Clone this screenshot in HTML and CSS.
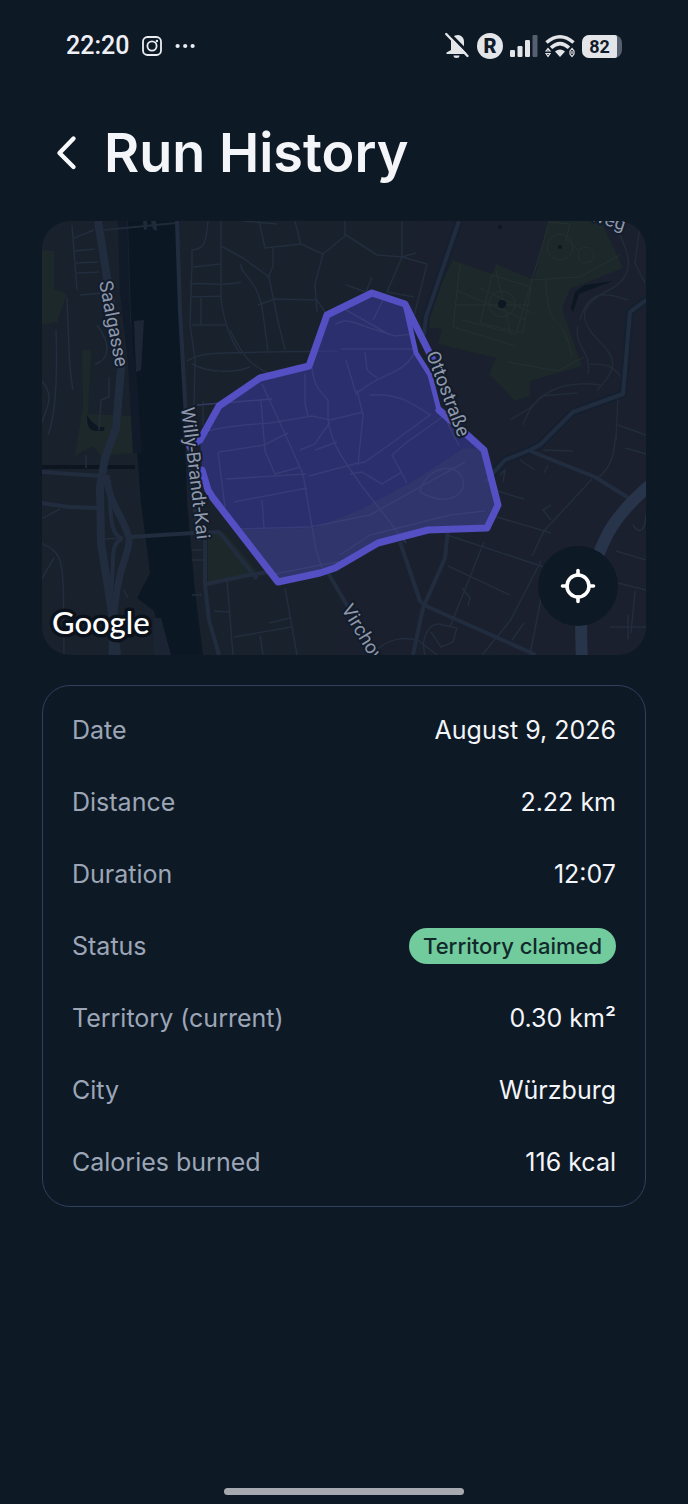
FILE: index.html
```html
<!DOCTYPE html>
<html lang="en">
<head>
<meta charset="utf-8">
<meta name="viewport" content="width=device-width, initial-scale=1">
<title>Run History</title>
<link rel="stylesheet" href="styles.css">
</head>
<body>
<div class="screen">
  <div class="status-bar">
    <div class="status-group status-left">
      <time class="clock">22:20</time>
      <svg class="icon" width="22" height="22" viewBox="0 0 22 22" fill="none" stroke="#e9edf3" stroke-width="1.8" aria-hidden="true">
        <rect x="2" y="2" width="18" height="18" rx="4.5"/><circle cx="11" cy="11" r="4.6"/><circle cx="15.9" cy="6" r="1.2" fill="#e9edf3" stroke="none"/>
      </svg>
      <svg class="icon" width="20" height="6" viewBox="0 0 20 6" fill="#e9edf3" aria-hidden="true"><circle cx="2.6" cy="3" r="2.1"/><circle cx="10.2" cy="3" r="2.1"/><circle cx="17.6" cy="3" r="2.1"/></svg>
    </div>
    <div class="status-group status-right">
      <svg class="icon" width="26" height="28" viewBox="0 0 26 28" aria-hidden="true">
        <path d="M2.500 22h20v-1.400L20 18V10c0-4-2-6.500-6-7-4.500 0-7 3-7 7v8l-4.500 2.600zM9.500 23.500h6a3 2.500 0 0 1-6 0z" fill="#e4e5e9"/>
        <path d="M4.200 .5 26 22.400" stroke="#0e1926" stroke-width="3"/><path d="M2.200 2 23.500 24" stroke="#e4e5e9" stroke-width="2.400" stroke-linecap="round"/>
      </svg>
      <span class="roaming">R</span>
      <svg class="icon" width="28" height="24" viewBox="0 0 28 24" fill="#e4e5e9" aria-hidden="true">
        <rect x="0" y="16" width="5" height="7" rx="1.200"/><rect x="7.500" y="12" width="5" height="11" rx="1.200"/><rect x="15" y="6" width="5" height="17" rx="1.200"/><rect x="22.500" y="1" width="5" height="22" rx="1.200" fill="#555f70"/>
      </svg>
      <svg class="icon" width="30" height="26" viewBox="0 0 30 26" fill="none" stroke="#e4e5e9" stroke-width="3.600" aria-hidden="true">
        <path d="M1.500 9.500Q15-2 28.500 9.500M6 14.800q9-8.400 18 0"/><path d="M10 18.500q5-4.200 10 0l-5 5.500z" fill="#e4e5e9" stroke="none"/>
        <path d="m1 18 2-2.500L5 18zM1 20.500l2 3 2-3zM25 18l2-2.500 2 2.500v3l-2 2.500-2-2.500zM27 18v3" stroke-width="1.200"/>
      </svg>
      <span class="battery"><span class="battery-level">82</span></span>
    </div>
  </div>

  <header class="header">
    <button class="back" type="button" aria-label="Back">
      <svg width="24" height="38" viewBox="0 0 24 38" fill="none" stroke="#f8f9fb" stroke-width="4.400" stroke-linecap="round" stroke-linejoin="round" aria-hidden="true"><path d="M17.500 4.500 3.500 19l14 14"/></svg>
    </button>
    <h1 class="title">Run History</h1>
  </header>

  <main class="content">
    <section class="map" aria-label="Run map">
      <svg class="map-canvas" viewBox="42 221 604 434" preserveAspectRatio="xMidYMid slice">
        <rect x="41" y="221" width="605" height="434" fill="#19212d"/>
        <path d="M420 221h226v434H340V470z" fill="#1a202d"/>
        <!-- parks -->
        <g fill="#1c2829">
          <path d="M41 250l13 1v38l13 5-10 28-16 3z"/>
          <path d="M82 350h9l-3 64 45 2v37l-32 3-8-10-18 10 8-50z"/>
          <path d="M453 260l39 14 4-10 38 16 14-59h53l22 47-53 21-8 20 20 57-52 15v15l-16 5-10-12-15-15 7-16-58-14 4-15-23-2z"/>
          <path d="M208 535l16-3 33 39-49 12z"/>
        </g>
        <!-- river and rail -->
        <path d="M128 221h49l2 80 5 100 3 100 8 90 8 64h-38l-11-44-17-13 13-25-9-70-7-90-3-100z" fill="#0c1724"/>
        <path d="M118 221h9l3 100 8 70 4 62h-9l-5-90-8-70z" fill="#101a28"/>
        <path d="M134 321l10-1-3 50-5 2z" fill="#1d2634"/>
        <path d="M154 618h7l10 37h-17z" fill="#1b2432"/>
        <path d="M41 467h94" stroke="#0d1520" stroke-width="4"/>
        <path d="M104 230l72-7" stroke="#202b3a" stroke-width="2" fill="none"/>
        <path d="M143 221h4v8l-3 1zM151 221h5l1 10-4-2z" fill="#202b3a"/>
        <path d="M87 415c3 5 6 8 12 12l5 0c2 5-3 4-7 4-8 0-10-5-10-16z" fill="#0c1722"/>
        <path d="M571 308l4-16 10-7 28-4-24 9-10 4-6 18z" fill="#0c1722"/>

        <!-- minor streets -->
        <g fill="none" stroke="#222d3d" stroke-width="1.500">
          <path d="M72 225l5 65M74 238l20-8M75 251l20-2M76 263l22-1M77 273l22-1M80 295l22-2"/>
          <path d="M56 330c2 60-2 90-8 105M67 298c2 50 2 70 6 92M97 325c15 20 12 35-2 39M109 377v20l-8 3-2 30"/>
          <path d="M208 221c-2 25-5 28-16 29v14l-2 60 5 36-1 50M221 221v78c4 30 12 45 20 55M193 267l27-3M190 284c20-2 30 3 51-2M191 297l30-1M201 298v27M192 325h34"/>
          <path d="M221 246l22 12 26 19 8 40 8 33M241 264c-2 10 18 15 22 50l5 37M258 305l17-6 42 1 10 15M259 221l6 27 36-4 22 10M273 248v18l-5 12M243 221l34 3M295 221l6 24M323 254l-8 30 2 28M323 254l22-18 0-15"/>
          <path d="M187 361c15-10 25-8 150-10M192 364c15 8 40 10 58 3M230 330c15 30 20 34 40 44M197 405l75-6M203 425l0-24"/>
          <path d="M346 235l31 20 25 2 25 7M402 257v-36M402 257l14-4M402 257l-15 35 27 5M427 264l-15 60M346 285l20 7 6-15"/>
          <!-- west -->
          <path d="M41 543c25 12 22 15 23 112M54 558l-13 22M60 509l-19 10M86 468v-13M41 380c15 15 5 30 0 45M104 539l18-1M124 590l4 8"/>
          <!-- south centre -->
          <path d="M192 550h10M192 560h11M214 611l15 1M227 580l6 75M234 637l57-10M260 635l3 20M269 623l21-5M285 588l12 67M192 595h10"/>
          <path d="M447 535l100 33M448 566l62 29M490 515l61 18M484 542l-34 85M541 561l-31 60-28 34M532 556l12-25 48-52M543 588l-13 67M524 623l-12 17M462 588l8 10-2 8M494 490l30 9M500 475l5-5-2 12M551 520l-8-10 8-5"/>
          <path d="M425 655c-5-18 5-35 18-30l14 3-4 14-12 5-10-15M373 655c10-15 30-20 46-14l18 14M616 551l30 9M618 583l28 7M635 591l-4 42M610 627h36M628 615v24M633 525c10 15 13-5 13-10M543 450l30 1M520 460l15 10M548 465l-4 8"/>
          <path d="M598 478c18-15 15-30 18-43M618 425l28 10M625 448l21 6"/>
        </g>
        <!-- palace gardens -->
        <g fill="none" stroke="#243132" stroke-width="1">
          <path d="M460 264l-7 63 62 19M462 320l54 14 32-108M492 275l-12 48 43 10 8-46zM480 288l52 25M496 270l15 65M455 305l75 0M530 280l50-3 40-22M548 222l22 2-4 15 12 11M508 362l50 9 26-14M546 280c2 60 15 25 26 77M456 290l70 30"/>
          <circle cx="560" cy="247" r="13"/><circle cx="586" cy="255" r="8"/><circle cx="502" cy="304" r="13"/>
        </g>
        <path d="M614 225c15 25 25 50-5 65s-32 30-8 53 5 35-4 48M640 225l-5 38 10 20M580 320c10-35 30-25 48-20M578 326c-5 20 14 25 10 48M600 385c-35-5-65 5-77 40M625 384c-10-20-20-20-35-20M510 420l20-12 12-12 35-3M618 395l-2 45" fill="none" stroke="#212b3a" stroke-width="1.500"/>
        <g fill="#0c1722"><circle cx="502" cy="304" r="4"/><circle cx="560" cy="247" r="2"/><circle cx="500" cy="227" r="2"/></g>
        <!-- roads -->
        <g fill="none" stroke="#142030" stroke-linejoin="round">
          <path d="M459 221l-33 96-2 18" stroke-width="8"/>
          <path d="M646 300l-16 12-7 82-50 18-33 33-10 5-25 10-20 22" stroke-width="8"/>
        </g>
        <g fill="none" stroke="#212d3e" stroke-linejoin="round">
          <path d="M98 221l12 75 11 72-5 60-11 30-5 30 1 55 11 70 5 42" stroke-width="8"/>
          <path d="M106 475c3 30 17 40 23 63 2 18-16 25-17 117" stroke-width="7"/>
          <path d="M109 480c2 35 0 55 14 59M122 539c-15 5-5 30-13 62" stroke-width="4"/>
          <path d="M129 537l65-4 25-1 38 47" stroke-width="4"/>
          <path d="M177 221l3 90 5 90 7 90 7 50" stroke-width="4"/>
          <path d="M205 540v45l4 35 10 35" stroke-width="4"/>
          <path d="M207 584l42-9 21-3" stroke-width="4"/>
          <path d="M41 472l60 4M41 503l28 4 30 1" stroke-width="4"/>
          <path d="M459 221l-33 96-2 18" stroke-width="4"/>
          <path d="M646 300l-16 12-7 82-50 18-33 33-10 5-25 10-20 22" stroke-width="4"/>
          <path d="M530 451l65 26 40 25" stroke-width="4"/>
          <path d="M400 542l20 59 6 5 110 49M448 530l-3 28-22 50-10 47M327 571l25 43" stroke-width="4"/>
        </g>
        <path d="M650 485c-35 30-47 50-62 100-7 15-8 30-6 75" stroke="#28344a" stroke-width="12" fill="none"/>

        <!-- claimed territory -->
        <path d="M372 293L405 304 416 353 430 375 439 410 464 432 484 450 498 505 487 528 428 530 378 543 335 568 278 582 208 492 202 470 200 440 219 406 260 378 309 366 327 315z" fill="#3d3ea8" fill-opacity=".52"/>
        <path d="M234 530L315 528 360 510 415 480 464 448 484 450 498 505 487 528 428 530 378 543 335 568 278 582z" fill="#3a4766" fill-opacity=".3"/>
        <g fill="none" stroke="#42457f" stroke-width="1.500" opacity=".55">
          <path d="M262 384l23 50 18 40 13 76 6 18M200 435q8-8 70-12l42-7 18 4 33-8M305 374v30l3 12M312 368c2 20 10 25 16 32v20c5 30 20 45 33 65l45 58M197 405l75-6M261 401l4 50 10 23 25-7M219 452l45-7 24-12M218 452l7 55M226 479l80-5M234 502l73-14M262 500l2 28M300 450l15-6 15-22M315 450l22-8M309 476l45-12M341 349l72 0M346 360l10 34c25-22 45-18 58-40M365 352l2 18 10 8M357 390l6 25-5 50M370 395c30-2 45 10 60 20l-30 22-35 25-12 2M392 455l15-13 37-26 15 30M392 455l15 28M350 474l12-2 20 12 20-12M335 325c10-8 20-2 35 3l25 8 18-2M346 310l44 25M373 320l10-20M240 529l70-2 60-12 95-53M270 575l50-10 30-5M340 555l30-20 80-20 35-4"/>
          <path d="M420 492c5-25 35-30 42-15s-12 32-42 15z"/>
        </g>
        <g fill="none" stroke="#544fc2" stroke-linejoin="round" stroke-linecap="round">
          <path d="M405 304L416 353 430 375 439 410" stroke-width="5"/>
          <path d="M439 410L464 432 484 450 498 505 487 528 428 530 378 543 335 568 320 573 278 582 213 498 208 490 202 470M190 447L200 440 219 406 260 378 309 366 327 315 372 293 405 304 433 360" stroke-width="7"/>
        </g>

        <!-- place names -->
        <g class="map-label">
          <text transform="translate(99 282) rotate(79)">Saalgasse</text>
          <text transform="translate(181 408) rotate(83)">Willy-Brandt-Kai</text>
          <text transform="translate(426 354) rotate(69)">Ottostraße</text>
          <text transform="translate(341 609) rotate(59)">Virchow</text>
          <text transform="translate(590 220) rotate(18)">weg</text>
        </g>
        <text class="map-brand" x="52" y="634">Google</text>
      </svg>
      <button class="locate" type="button" aria-label="Centre the map">
        <svg width="36" height="36" viewBox="0 0 36 36" fill="none" stroke="#fff" stroke-width="3.600" stroke-linecap="round" aria-hidden="true"><circle cx="18" cy="18" r="11"/><path d="M18 2.500V7M18 29v4.500M2.500 18H7M29 18h4.500"/></svg>
      </button>
    </section>

    <dl class="details">
      <div class="row"><dt>Date</dt><dd>August 9, 2026</dd></div>
      <div class="row"><dt>Distance</dt><dd>2.22 km</dd></div>
      <div class="row"><dt>Duration</dt><dd>12:07</dd></div>
      <div class="row"><dt>Status</dt><dd class="badge">Territory claimed</dd></div>
      <div class="row"><dt>Territory (current)</dt><dd>0.30 km²</dd></div>
      <div class="row"><dt>City</dt><dd>Würzburg</dd></div>
      <div class="row"><dt>Calories burned</dt><dd>116 kcal</dd></div>
    </dl>
  </main>
  <div class="home-indicator"></div>
</div>
</body>
</html>
```
FILE: styles.css
```css
* { box-sizing: border-box; }

body {
  margin: 0;
  background: #0e1926;
  color: #f3f5f8;
  font-family: Inter, "Open Sans", sans-serif;
}

button {
  padding: 0;
  border: 0;
  background: none;
  cursor: pointer;
}

.screen {
  display: flex;
  flex-direction: column;
  min-height: 100vh;
}

.status-bar {
  display: flex;
  align-items: center;
  justify-content: space-between;
  height: 92px;
  padding: 0 66px;
  font-family: Roboto, sans-serif;
}

.status-group { display: flex; align-items: center; }
.status-left { gap: 12px; }
.status-right { gap: 7px; }
.icon { display: block; flex: none; }

.clock {
  font-size: 25px;
  font-weight: 500;
  line-height: 32px;
  color: #eef0f5;
}

.roaming {
  display: grid;
  place-items: center;
  width: 26px;
  height: 26px;
  border-radius: 50%;
  background: #e4e5e9;
  color: #111b29;
  font-size: 20px;
  font-weight: 900;
  line-height: 26px;
}

.battery {
  width: 40px;
  padding-right: 5px;
  border-radius: 8px;
  background: #555f70;
}

.battery-level {
  display: block;
  border-radius: 7px 2px 2px 7px;
  background: #e4e5e9;
  color: #111b29;
  font-size: 18px;
  font-weight: 700;
  line-height: 23px;
  text-align: center;
}

.header {
  display: flex;
  align-items: center;
  gap: 24px;
  padding: 25px 56px 32px;
}

.back { flex: none; width: 24px; height: 38px; }
.back svg { display: block; }

.title {
  margin: 0;
  font-size: 54px;
  font-weight: 600;
  line-height: 72px;
}

.content {
  display: flex;
  flex-direction: column;
  gap: 30px;
  padding: 0 42px;
}

.map {
  position: relative;
  border-radius: 28px;
  overflow: hidden;
}

.map-canvas { display: block; width: 100%; height: auto; }

.map-label {
  fill: #8e98aa;
  stroke: #131c2a;
  stroke-width: 4px;
  stroke-linejoin: round;
  paint-order: stroke;
  font-family: Roboto, sans-serif;
  font-size: 19px;
}

.map-brand {
  fill: #fff;
  stroke: #0b121b;
  stroke-width: 7px;
  stroke-linejoin: round;
  paint-order: stroke;
  font-family: Lato, sans-serif;
  font-size: 31px;
  font-weight: 500;
}

.locate {
  position: absolute;
  right: 28px;
  bottom: 29px;
  display: grid;
  place-items: center;
  width: 80px;
  height: 80px;
  border-radius: 50%;
  background: #0d1925;
}

.details {
  margin: 0;
  padding: 8px 29px;
  border: 1px solid #30405d;
  border-radius: 28px;
}

.row {
  display: flex;
  align-items: center;
  justify-content: space-between;
  gap: 16px;
  height: 72px;
  font-size: 25px;
  line-height: 32px;
}

.row dt { color: #9ca6b6; }
.row dd { margin: 0; }

.row .badge {
  padding: 0 14px;
  border-radius: 18px;
  background: #71cb9d;
  color: #12292b;
  font-size: 22px;
  font-weight: 500;
  line-height: 36px;
}

.home-indicator {
  width: 35%;
  height: 7px;
  margin: auto auto 9px;
  border-radius: 4px;
  background: #a6a9b0;
}
```
